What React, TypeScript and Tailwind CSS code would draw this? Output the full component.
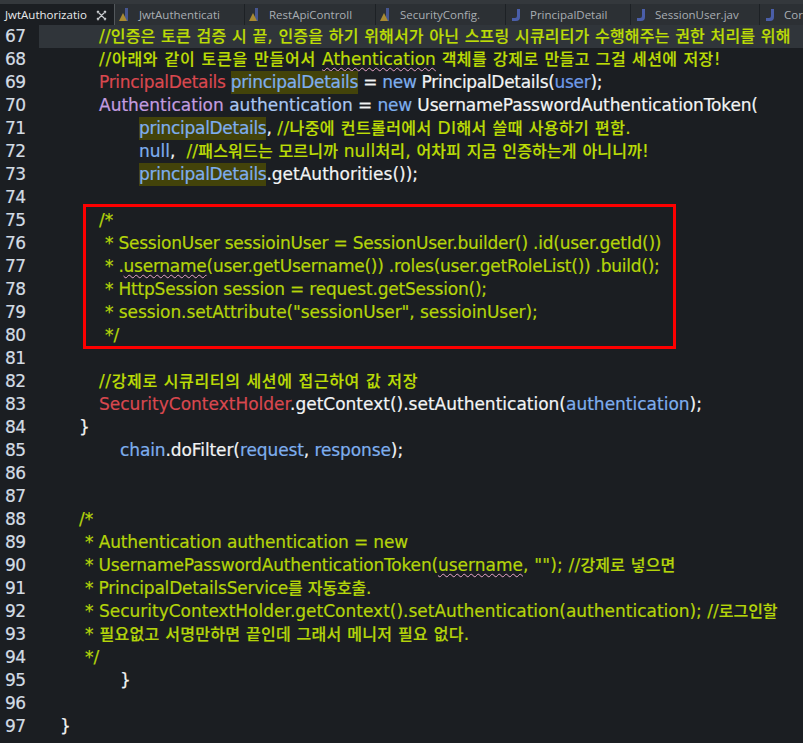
import type { ReactNode } from 'react';

const green = 'text-[#b4d40a]';
const comment = 'text-[#bcdc06]';
const white = 'text-[#f2f4f5]';
const blue = 'text-[#7eaeee]';
const red = 'text-[#d9484f]';
const purple = 'text-[#c39ce0]';

// hangul runs are set a little smaller than the latin text around them
function Ko({ text }: { text: string }) {
	return (
		<>
			{text.split(/([\uac00-\ud7a3]+)/).map((part, i) =>
				i % 2 ? (
					<span key={i} className="text-[16px] font-medium">
						{part}
					</span>
				) : (
					part
				),
			)}
		</>
	);
}

function Squiggle({ children }: { children: ReactNode }) {
	return (
		<span className="underline decoration-wavy decoration-[#e7a6c8] decoration-1 underline-offset-2">
			{children}
		</span>
	);
}

function Mark({ children }: { children: ReactNode }) {
	return <span className="inline-block h-[23px] bg-[#43430a] tracking-[-0.3px]">{children}</span>;
}

type Row = { n: number; indent: number; body?: ReactNode; current?: boolean };

const rows: Row[] = [
	{
		n: 67,
		indent: 99,
		current: true,
		body: (
			<span className={`${comment} tracking-[0.175px]`}>
				<Ko text="//인증은 토큰 검증 시 끝, 인증을 하기 위해서가 아닌 스프링 시큐리티가 수행해주는 권한 처리를 위해" />
			</span>
		),
	},
	{
		n: 68,
		indent: 99,
		body: (
			<span className={comment}>
				<span className="tracking-[0.74px]">
					<Ko text="//아래와 같이 토큰을 만들어서 " />
				</span>
				<Squiggle>Athentication</Squiggle>
				<span className="tracking-[0.45px]">
					<Ko text=" 객체를 강제로 만들고 그걸 세션에 저장!" />
				</span>
			</span>
		),
	},
	{
		n: 69,
		indent: 99,
		body: (
			<span className="tracking-[-0.3px]">
				<span className={red}>PrincipalDetails</span>{' '}
				<Mark>
					<span className={blue}>principalDetails</span>
				</Mark>
				<span className={white}> = </span>
				<span className={blue}>new</span>
				<span className={white}> PrincipalDetails(</span>
				<span className="text-[#6f9be8]">user</span>
				<span className={white}>);</span>
			</span>
		),
	},
	{
		n: 70,
		indent: 99,
		body: (
			<>
				<span className={purple}>Authentication</span>
				<span className="text-[#a9c6f2]"> authentication</span>
				<span className="tracking-[-0.15px]">
					<span className={white}> = </span>
					<span className={blue}>new</span>
					<span className={white}> UsernamePasswordAuthenticationToken(</span>
				</span>
			</>
		),
	},
	{
		n: 71,
		indent: 139,
		body: (
			<>
				<Mark>
					<span className={blue}>principalDetails</span>
				</Mark>
				<span className={white}>, </span>
				<span className={`${comment} tracking-[0.42px]`}>
					<Ko text="//나중에 컨트롤러에서 DI해서 쓸때 사용하기 편함." />
				</span>
			</>
		),
	},
	{
		n: 72,
		indent: 139,
		body: (
			<>
				<span className={blue}>null</span>
				<span className={white}>, </span>
				<span className={`${comment} tracking-[0.19px]`}>
					<Ko text=" //패스워드는 모르니까 null처리, 어차피 지금 인증하는게 아니니까!" />
				</span>
			</>
		),
	},
	{
		n: 73,
		indent: 139,
		body: (
			<>
				<Mark>
					<span className={blue}>principalDetails</span>
				</Mark>
				<span className={white}>.getAuthorities());</span>
			</>
		),
	},
	{ n: 74, indent: 0 },
	{ n: 75, indent: 99, body: <span className={green}>/*</span> },
	{
		n: 76,
		indent: 105,
		body: <span className={`${green} tracking-[-0.23px]`}>* SessionUser sessioinUser = SessionUser.builder() .id(user.getId())</span>,
	},
	{
		n: 77,
		indent: 105,
		body: (
			<span className={`${green} tracking-[-0.25px]`}>
				* .<Squiggle>username</Squiggle>(user.getUsername()) .roles(user.getRoleList()) .build();
			</span>
		),
	},
	{
		n: 78,
		indent: 105,
		body: <span className={`${green} tracking-[-0.2px]`}>* HttpSession session = request.getSession();</span>,
	},
	{
		n: 79,
		indent: 105,
		body: <span className={`${green} tracking-[-0.08px]`}>* session.setAttribute("sessionUser", sessioinUser);</span>,
	},
	{ n: 80, indent: 105, body: <span className={green}>*/</span> },
	{ n: 81, indent: 0 },
	{
		n: 82,
		indent: 99,
		body: (
			<span className={`${comment} tracking-[0.62px]`}>
				<Ko text="//강제로 시큐리티의 세션에 접근하여 값 저장" />
			</span>
		),
	},
	{
		n: 83,
		indent: 99,
		body: (
			<>
				<span className={red}>SecurityContextHolder</span>
				<span className={white}>.getContext().setAuthentication(</span>
				<span className={blue}>authentication</span>
				<span className={white}>);</span>
			</>
		),
	},
	{ n: 84, indent: 79, body: <span className={white}>{'}'}</span> },
	{
		n: 85,
		indent: 120,
		body: (
			<span className="tracking-[-0.1px]">
				<span className={blue}>chain</span>
				<span className={white}>.doFilter(</span>
				<span className={blue}>request</span>
				<span className={white}>, </span>
				<span className={blue}>response</span>
				<span className={white}>);</span>
			</span>
		),
	},
	{ n: 86, indent: 0 },
	{ n: 87, indent: 0 },
	{ n: 88, indent: 79, body: <span className={green}>/*</span> },
	{
		n: 89,
		indent: 85,
		body: <span className={`${green} tracking-[-0.13px]`}>* Authentication authentication = new</span>,
	},
	{
		n: 90,
		indent: 85,
		body: (
			<span className={green}>
				<span className="tracking-[-0.18px]">* UsernamePasswordAuthenticationToken(</span>
				<Squiggle>username</Squiggle>
				<span className="tracking-[0.2px]">
					<Ko text={', ""); //강제로 넣으면'} />
				</span>
			</span>
		),
	},
	{
		n: 91,
		indent: 85,
		body: (
			<span className={`${green} tracking-[-0.2px]`}>
				<Ko text="* PrincipalDetailsService를 자동호출." />
			</span>
		),
	},
	{
		n: 92,
		indent: 85,
		body: (
			<span className={green}>
				<Ko text="* SecurityContextHolder.getContext().setAuthentication(authentication); //로그인할" />
			</span>
		),
	},
	{
		n: 93,
		indent: 85,
		body: (
			<span className={`${green} tracking-[0.28px]`}>
				<Ko text="* 필요없고 서명만하면 끝인데 그래서 메니저 필요 없다." />
			</span>
		),
	},
	{ n: 94, indent: 85, body: <span className={green}>*/</span> },
	{ n: 95, indent: 120, body: <span className={white}>{'}'}</span> },
	{ n: 96, indent: 0 },
	{ n: 97, indent: 60, body: <span className={white}>{'}'}</span> },
];

function JavaIcon({ warn }: { warn?: boolean }) {
	if (warn) {
		return (
			<svg width="14" height="16" viewBox="0 0 14 16" className="shrink-0">
				<rect x="6" y="1" width="3" height="13" fill="#46568f" />
				<path d="M0 14l4-8 4 8z" fill="#a98a32" />
			</svg>
		);
	}
	return (
		<svg width="14" height="16" viewBox="0 0 14 16" className="shrink-0">
			<path d="M7 2h3v8q0 4-4 4H2v-3h3q2 0 2-2z" fill="#4a5ea8" />
		</svg>
	);
}

function Tab({ label, width, warn }: { label: string; width: number; warn?: boolean }) {
	return (
		<div
			className="flex h-full shrink-0 items-center gap-[6px] border-r border-[#1d2125] pl-[4px] text-[#a9aeb3]"
			style={{ width }}
		>
			<JavaIcon warn={warn} />
			<span className="whitespace-nowrap">{label}</span>
		</div>
	);
}

export default function App() {
	return (
		<div className="relative h-[743px] w-[803px] overflow-hidden bg-[#1b1e22] font-['DejaVu_Sans','Noto_Sans_CJK_KR',sans-serif]">
			<div className="flex h-[26px] overflow-hidden border-t-[4px] border-[#34383c] bg-[#2c3034] font-['Open_Sans',sans-serif] text-[11.5px]">
				<div className="flex h-full w-[115px] shrink-0 items-center justify-between border-r border-[#53585c] bg-[#1b1e22] pl-[5px] pr-[7px] text-[#e8eaec]">
					<span>JwtAuthorizatio</span>
					<svg width="11" height="11" viewBox="0 0 11 11" fill="none" stroke="#c8cbce" strokeWidth="1.2">
						<path d="M1 1l9 9M10 1l-9 9M1 3l2-2M8 10l2-2M1 8l2 2M8 1l2 2" />
					</svg>
				</div>
				<Tab label="JwtAuthenticati" width={130} warn />
				<Tab label="RestApiControll" width={131} warn />
				<Tab label="SecurityConfig." width={130} warn />
				<Tab label="PrincipalDetail" width={125} />
				<Tab label="SessionUser.jav" width={129} />
				<Tab label="Cor" width={60} />
			</div>
			<div className="-mt-px text-[17px] leading-[23px] [-webkit-text-stroke:0.2px]">
				{rows.map((row) => (
					<div key={row.n} className="flex h-[23px] whitespace-pre">
						<div className="w-[39px] shrink-0 pl-[5px] tracking-[-0.5px] text-[#d3dce4]">{row.n}</div>
						<div
							className={row.current ? 'min-w-0 flex-1 bg-[#30353a]' : 'min-w-0 flex-1'}
							style={{ paddingLeft: row.indent ? row.indent - 39 : 0 }}
						>
							{row.body}
						</div>
					</div>
				))}
			</div>
			<div className="absolute left-[83px] top-[204px] h-[145px] w-[593px] border-[3px] border-[#fe0000]" />
		</div>
	);
}
